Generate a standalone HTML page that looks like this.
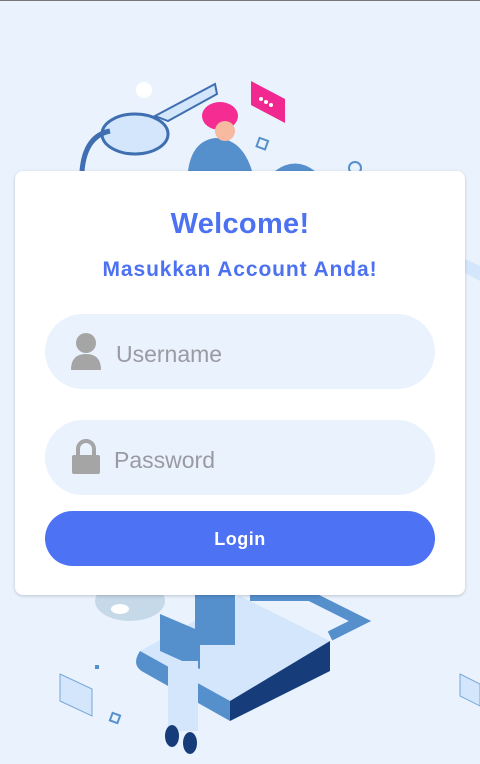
<!DOCTYPE html>
<html><head><meta charset="utf-8"><style>
*{margin:0;padding:0;box-sizing:border-box}
body{width:480px;height:763px;background:#eaf2fe;font-family:"Liberation Sans",sans-serif;position:relative;overflow:hidden;border-top:1px solid #777}
svg.bg{position:absolute;left:0;top:0}
.card{position:absolute;left:15px;top:170px;width:450px;height:424px;background:#fff;border-radius:8px;box-shadow:0 1px 3px rgba(0,0,0,.2)}
h1{position:absolute;top:37px;width:100%;text-align:center;color:#4d72f1;font-size:29px;font-weight:bold;letter-spacing:0.3px}
h2{position:absolute;top:87px;width:100%;text-align:center;color:#4d72f1;font-size:21px;font-weight:bold;letter-spacing:0.9px}
.inp{position:absolute;left:30px;width:390px;height:75px;border-radius:38px;background:#eaf2fe;color:#9a9aa2;font-size:23px;line-height:80px}
.btn{position:absolute;left:30px;top:340px;width:390px;height:55px;border-radius:28px;background:#4d72f3;color:#fff;font-weight:bold;font-size:18px;text-align:center;line-height:57px;letter-spacing:0.5px}
</style></head><body>
<svg class="bg" width="480" height="763">
<circle cx="144" cy="89" r="8" fill="#fff"/>
<polygon points="155,115 215,83 217,93 168,120" fill="#d3e6fb" stroke="#3f6fb0" stroke-width="2"/>
<ellipse cx="135" cy="133" rx="33" ry="20" fill="#d3e6fb" stroke="#3f6fb0" stroke-width="3"/>
<path d="M82 170 Q85 135 110 130" fill="none" stroke="#3f6fb0" stroke-width="5"/>
<polygon points="251,80 285,98 285,122 251,104" fill="#f0288f"/>
<circle cx="261" cy="98" r="2" fill="#fff"/><circle cx="266" cy="101" r="2" fill="#fff"/><circle cx="271" cy="104" r="2" fill="#fff"/>
<path d="M188 170 Q192 140 215 137 Q242 137 252 170Z" fill="#5590cd"/>
<ellipse cx="220" cy="115" rx="18" ry="14" fill="#f52c92"/>
<circle cx="225" cy="130" r="10" fill="#f7b9a0"/>
<rect x="258" y="138" width="9" height="9" fill="none" stroke="#5590cd" stroke-width="2" transform="rotate(20 262 142)"/>
<path d="M275 170 Q295 155 315 170Z" fill="#5590cd"/>
<circle cx="355" cy="167" r="6" fill="none" stroke="#5590cd" stroke-width="2"/>
<polygon points="140,650 240,595 330,640 230,700" fill="#d3e6fb"/>
<polygon points="230,700 330,640 330,670 230,720" fill="#163d7a"/>
<path d="M140 650 Q130 665 145 672 L230 720 L230 700Z" fill="#5590cd"/>
<path d="M250 595 L310 595 L360 620 L330 635" fill="none" stroke="#5590cd" stroke-width="10"/>
<ellipse cx="130" cy="600" rx="35" ry="20" fill="#c6d9e8"/>
<ellipse cx="120" cy="608" rx="9" ry="5" fill="#fff"/>
<rect x="195" y="594" width="40" height="50" fill="#5590cd"/>
<polygon points="160,613 200,630 200,668 160,650" fill="#5590cd"/>
<rect x="168" y="660" width="30" height="70" fill="#d3e6fb"/>
<ellipse cx="172" cy="735" rx="7" ry="11" fill="#163d7a"/><ellipse cx="190" cy="742" rx="7" ry="11" fill="#163d7a"/>
<polygon points="60,673 92,688 92,715 60,700" fill="#d3e6fb" stroke="#7aa8d8"/>
<rect x="111" y="713" width="8" height="8" fill="none" stroke="#5590cd" stroke-width="2" transform="rotate(20 115 717)"/>
<rect x="95" y="664" width="4" height="4" fill="#5590cd"/>
<polygon points="460,673 480,683 480,705 460,695" fill="#d3e6fb" stroke="#7aa8d8"/>
<polygon points="465,258 480,265 480,280 465,272" fill="#d3e6fb"/>
</svg>
<div class="card">
<h1>Welcome!</h1>
<h2>Masukkan Account Anda!</h2>
<div class="inp" style="top:143px">
<svg style="position:absolute;left:25px;top:18px" width="34" height="40"><circle cx="16" cy="11" r="10" fill="#a5a5a5"/><path d="M1 38 Q1 22 16 22 Q31 22 31 38Z" fill="#a5a5a5"/></svg>
<span style="position:absolute;left:71px">Username</span></div>
<div class="inp" style="top:249px">
<svg style="position:absolute;left:25px;top:18px" width="34" height="40"><path d="M8 17 V11 A8 8 0 0 1 24 11 V17" fill="none" stroke="#a5a5a5" stroke-width="4"/><rect x="2" y="17" width="28" height="19" rx="2" fill="#a5a5a5"/></svg>
<span style="position:absolute;left:69px">Password</span></div>
<div class="btn">Login</div>
</div>
</body></html>
